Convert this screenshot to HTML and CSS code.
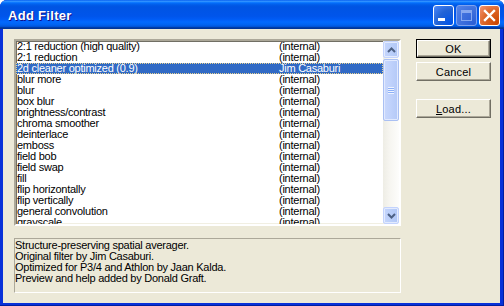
FILE: index.html
```html
<!DOCTYPE html>
<html>
<head>
<meta charset="utf-8">
<link rel="stylesheet" href="styles.css">
</head>
<body>
<div class="window">
  <div class="titlebar">
    <span class="title">Add Filter</span>
    <div class="controls">
      <span class="cbtn min"><span class="min-bar"></span></span>
      <span class="cbtn max"><span class="max-box"></span></span>
      <span class="cbtn close">
        <svg width="13" height="13" viewBox="0 0 13 13"><path d="M2 2 L11 11 M11 2 L2 11" stroke="#fff" stroke-width="2.4" stroke-linecap="square"/></svg>
      </span>
    </div>
  </div>
  <div class="client">
    <div class="main">
      <div class="listbox">
        <div class="items">
          <div class="row"><span class="name">2:1 reduction (high quality)</span><span class="author">(internal)</span></div>
          <div class="row"><span class="name">2:1 reduction</span><span class="author">(internal)</span></div>
          <div class="row selected"><span class="name">2d cleaner optimized (0.9)</span><span class="author">Jim Casaburi</span></div>
          <div class="row"><span class="name">blur more</span><span class="author">(internal)</span></div>
          <div class="row"><span class="name">blur</span><span class="author">(internal)</span></div>
          <div class="row"><span class="name">box blur</span><span class="author">(internal)</span></div>
          <div class="row"><span class="name">brightness/contrast</span><span class="author">(internal)</span></div>
          <div class="row"><span class="name">chroma smoother</span><span class="author">(internal)</span></div>
          <div class="row"><span class="name">deinterlace</span><span class="author">(internal)</span></div>
          <div class="row"><span class="name">emboss</span><span class="author">(internal)</span></div>
          <div class="row"><span class="name">field bob</span><span class="author">(internal)</span></div>
          <div class="row"><span class="name">field swap</span><span class="author">(internal)</span></div>
          <div class="row"><span class="name">fill</span><span class="author">(internal)</span></div>
          <div class="row"><span class="name">flip horizontally</span><span class="author">(internal)</span></div>
          <div class="row"><span class="name">flip vertically</span><span class="author">(internal)</span></div>
          <div class="row"><span class="name">general convolution</span><span class="author">(internal)</span></div>
          <div class="row"><span class="name">grayscale</span><span class="author">(internal)</span></div>
        </div>
        <div class="scrollbar">
          <span class="sbtn">
            <svg width="9" height="6" viewBox="0 0 9 6"><path d="M1 5 L4.5 1.5 L8 5" fill="none" stroke="#4d6185" stroke-width="2"/></svg>
          </span>
          <div class="track">
            <span class="thumb"><span class="grip"></span></span>
          </div>
          <span class="sbtn">
            <svg width="9" height="6" viewBox="0 0 9 6"><path d="M1 1 L4.5 4.5 L8 1" fill="none" stroke="#4d6185" stroke-width="2"/></svg>
          </span>
        </div>
      </div>
      <div class="desc">
        <div>Structure-preserving spatial averager.</div>
        <div>Original filter by Jim Casaburi.</div>
        <div>Optimized for P3/4 and Athlon by Jaan Kalda.</div>
        <div>Preview and help added by Donald Graft.</div>
      </div>
    </div>
    <div class="buttons">
      <span class="btn default"><span class="btn-face">OK</span></span>
      <span class="btn"><span class="btn-face">Cancel</span></span>
      <span class="btn load"><span class="btn-face"><u>L</u>oad...</span></span>
    </div>
  </div>
</div>
</body>
</html>
```

FILE: styles.css
```css
html, body {
  margin: 0;
  padding: 0;
  background: #ffffff;
}

.window {
  width: 504px;
  height: 306px;
  display: flex;
  flex-direction: column;
  background: #0831d9;
  border-radius: 7px 7px 0 0;
  box-shadow: inset -1px -1px 0 #001ea0, inset 1px 0 0 #0831d9;
  overflow: hidden;
  font-family: "Liberation Sans", Arial, sans-serif;
  font-size: 11px;
  color: #000;
}

.titlebar {
  height: 29px;
  flex: none;
  display: flex;
  align-items: center;
  justify-content: space-between;
  padding: 0 4px 0 8px;
  background: linear-gradient(to bottom, #0058ee 0%, #3593ff 4%, #288eff 6%, #127dff 8%, #036ffc 10%, #0262ee 14%, #0057e5 20%, #0054e3 24%, #0055eb 56%, #005bf5 66%, #026afe 76%, #0062ef 86%, #0052d6 92%, #0040ab 94%, #003092 100%);
}

.title {
  color: #fff;
  font-family: "Liberation Sans", Arial, sans-serif;
  font-weight: bold;
  font-size: 13px;
  letter-spacing: 0.3px;
  text-shadow: 1px 1px #0f1089;
  padding-top: 2px;
}

.controls {
  display: flex;
  gap: 2px;
  padding-top: 2px;
}

.cbtn {
  width: 19px;
  height: 19px;
  border: 1px solid #fff;
  border-radius: 3px;
  display: flex;
  align-items: center;
  justify-content: center;
  position: relative;
}

.min {
  background: radial-gradient(circle at 90% 90%, #0054e9 0%, #2263d5 55%, #4480f3 90%, #6c9ff8 100%);
}

.min-bar {
  position: absolute;
  left: 4px;
  bottom: 4px;
  width: 7px;
  height: 3px;
  background: #fff;
}

.max {
  background: radial-gradient(circle at 90% 90%, #2b5fd6 0%, #3f70dd 55%, #5585ea 100%);
  border-color: #7ea2ee;
}

.max-box {
  width: 9px;
  height: 7px;
  border: 1px solid #86a8f0;
  border-top-width: 3px;
}

.close {
  background: radial-gradient(circle at 90% 90%, #cc4600 0%, #dc6527 55%, #f08a63 90%, #f7a586 100%);
}

.client {
  flex: 1;
  margin: 0 4px 3px 3px;
  background: #ece9d8;
  display: flex;
  padding: 10px 0 0 11px;
  gap: 15px;
}

.main {
  display: flex;
  flex-direction: column;
  gap: 12px;
}

.listbox {
  width: 383px;
  height: 183px;
  border: 2px solid;
  border-color: #aca899 #ffffff #ffffff #aca899;
  box-shadow: inset 1px 1px 0 #716f64, inset -1px -1px 0 #f1efe2;
  background: #fff;
  display: flex;
  overflow: hidden;
}

.items {
  flex: 1;
  overflow: hidden;
  padding-left: 0;
}

.row {
  height: 11px;
  line-height: 11px;
  display: flex;
  white-space: nowrap;
  letter-spacing: -0.25px;
}

.row .name {
  width: 262px;
  padding-left: 1px;
}

.row.selected {
  background: #316ac5;
  color: #fff;
  outline: 1px dotted #e8d290;
  outline-offset: -1px;
}

.scrollbar {
  width: 16px;
  display: flex;
  flex-direction: column;
  background: linear-gradient(to right, #eeede5, #f6f5f0 40%, #fdfdfb);
}

.sbtn {
  height: 15px;
  flex: none;
  border: 1px solid #c3d3fd;
  border-radius: 2px;
  background: linear-gradient(to right, #c5d5fc, #bacffa 50%, #b1c7f6);
  box-shadow: inset 0 0 0 1px #e3ebfe;
  display: flex;
  align-items: center;
  justify-content: center;
}

.track {
  flex: 1;
  padding-top: 1px;
}

.thumb {
  height: 60px;
  display: flex;
  align-items: center;
  justify-content: center;
  border: 1px solid #aac0f3;
  border-radius: 2px;
  background: linear-gradient(to right, #c9d8fc, #bfd1fb 50%, #b4c9f7);
  box-shadow: inset 0 0 0 1px #e1e9fe;
}

.grip {
  width: 6px;
  height: 7px;
  background: repeating-linear-gradient(to bottom, #eef3fe 0, #eef3fe 1px, #8cb0f8 1px, #8cb0f8 2px);
}

.desc {
  width: 385px;
  height: 52px;
  border: 1px solid;
  border-color: #aca899 #ffffff #ffffff #aca899;
  padding-top: 1px;
  line-height: 11px;
  letter-spacing: -0.25px;
  white-space: nowrap;
}

.buttons {
  display: flex;
  flex-direction: column;
  gap: 4px;
}

.btn {
  width: 75px;
  height: 19px;
  box-sizing: border-box;
  display: flex;
}

.btn-face {
  flex: 1;
  display: flex;
  align-items: center;
  justify-content: center;
  background: #ece9d8;
  border: 1px solid;
  border-color: #ffffff #716f64 #716f64 #ffffff;
  box-shadow: inset -1px -1px 0 #aca899;
  letter-spacing: 0.2px;
}

.btn.default {
  border: 1px solid #000;
}

.btn.load {
  margin-top: 14px;
}
```
